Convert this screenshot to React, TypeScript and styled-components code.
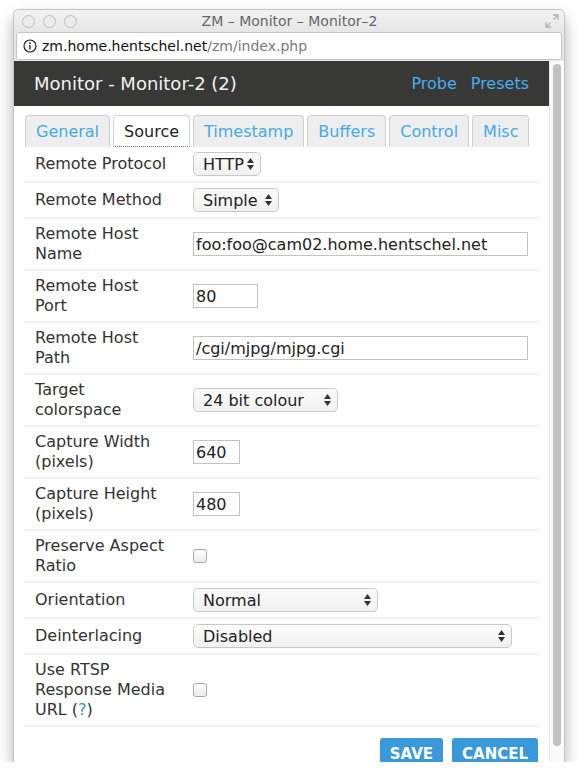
import React from 'react';
import styled, { createGlobalStyle } from 'styled-components';

const GlobalStyle = createGlobalStyle`
  html, body {
    margin: 0;
    padding: 0;
    background: #fff;
  }
  body {
    font-family: "DejaVu Sans", Verdana, sans-serif;
    color: #333;
  }
`;

const Window = styled.div`
  margin: 10px 14px 0;
  width: 550px;
  height: 752px;
  display: flex;
  flex-direction: column;
  border-radius: 5px 5px 0 0;
  overflow: hidden;
  box-shadow: 0 0 0 1px #c4c4c4, 0 8px 16px rgba(0, 0, 0, 0.35);
  background: #fff;
`;

const TitleBar = styled.div`
  height: 22px;
  display: flex;
  align-items: center;
  padding: 0 6px 0 8px;
  background: linear-gradient(#f2f2f2, #e6e6e6);
  position: relative;
`;

const Lights = styled.div`
  display: flex;
  gap: 8px;
`;

const Light = styled.span`
  width: 11px;
  height: 11px;
  border-radius: 50%;
  border: 1px solid #bdbdbd;
  background: #ececec;
`;

const WindowTitle = styled.div`
  flex: 1;
  text-align: center;
  font-size: 14px;
  color: #666;
  margin-right: 56px;
`;

const UrlBar = styled.div`
  height: 28px;
  padding: 0 2px 1px;
  background: #e6e6e6;
  display: flex;
`;

const UrlField = styled.div`
  flex: 1;
  display: flex;
  align-items: center;
  gap: 5px;
  padding: 0 6px;
  background: #fff;
  border: 1px solid #c6c6c6;
  border-radius: 3px;
  font-size: 14px;
  color: #111;
`;

const UrlPath = styled.span`
  color: #7a7a7a;
`;

const Viewport = styled.div`
  flex: 1;
  display: flex;
  min-height: 0;
`;

const Page = styled.div`
  flex: 1;
  overflow: hidden;
`;

const ScrollTrack = styled.div`
  width: 15px;
  border-left: 1px solid #e8e8e8;
  background: #fafafa;
  padding: 3px 3px 0 3px;
  box-sizing: border-box;
`;

const ScrollThumb = styled.div`
  width: 8px;
  height: 682px;
  border-radius: 4px;
  background: #c2c2c2;
`;

const Header = styled.div`
  height: 45px;
  background: #383836;
  display: flex;
  align-items: center;
  padding: 0 20px;
`;

const PageTitle = styled.h1`
  flex: 1;
  margin: 0;
  font-size: 18px;
  font-weight: normal;
  color: #f2f2f2;
`;

const HeaderLink = styled.a`
  color: #44aef0;
  font-size: 16px;
  margin-left: 14px;
  text-decoration: none;
`;

const Tabs = styled.div`
  display: flex;
  gap: 3px;
  margin: 9px 10px 0 11px;
`;

const Tab = styled.div<{ $active?: boolean }>`
  height: 32px;
  box-sizing: border-box;
  padding: 0 10px;
  display: flex;
  align-items: center;
  font-size: 16px;
  border: 1px solid #d0d0d0;
  border-bottom: ${(p) => (p.$active ? '1px dotted #6a6aa8' : 'none')};
  border-radius: 4px 4px 0 0;
  background: ${(p) => (p.$active ? '#fff' : '#eee')};
  color: ${(p) => (p.$active ? '#222' : '#45aaea')};
`;

const Form = styled.div`
  margin: 0 11px 0 10px;
`;

const Row = styled.div`
  display: grid;
  grid-template-columns: 158px 1fr;
  align-items: center;
  padding: 5px 0 5px 11px;
  border-bottom: 2px solid #f0f0f0;
`;

const Label = styled.div`
  max-width: 140px;
  font-size: 16px;
  line-height: 20px;
  color: #333;
`;

const Help = styled.span`
  color: #2f93d8;
`;

const Control = styled.div`
  display: flex;
  align-items: center;
  min-height: 24px;
`;

const SelectBox = styled.div<{ $width: number }>`
  width: ${(p) => p.$width}px;
  height: 24px;
  box-sizing: border-box;
  display: flex;
  align-items: center;
  padding: 0 5px 0 9px;
  border: 1px solid #c8c8c8;
  border-radius: 5px;
  background: linear-gradient(#fbfbfb, #f1f1f1);
  font-size: 16px;
  color: #222;
`;

const SelectText = styled.span`
  flex: 1;
`;

const TextInput = styled.input<{ $width: number }>`
  width: ${(p) => p.$width}px;
  height: 24px;
  box-sizing: border-box;
  border: 1px solid #c2c2c2;
  padding: 0 2px;
  font-family: "DejaVu Sans", Verdana, sans-serif;
  font-size: 16px;
  color: #222;
  outline: none;
`;

const Checkbox = styled.span`
  width: 14px;
  height: 14px;
  box-sizing: border-box;
  border: 1px solid #a8a8a8;
  border-radius: 3px;
  background: linear-gradient(#fff, #ececec);
`;

const Actions = styled.div`
  display: flex;
  justify-content: flex-end;
  gap: 9px;
  margin: 11px 11px 0 0;
`;

const Button = styled.button`
  height: 32px;
  padding: 7px 10px 0;
  border: none;
  border-radius: 3px 3px 0 0;
  background: #3a9ad9;
  color: #fff;
  font-family: "DejaVu Sans", Verdana, sans-serif;
  font-size: 15px;
  font-weight: bold;
  display: flex;
  align-items: flex-start;
`;

const Arrows = () => (
  <svg width="9" height="14" viewBox="0 0 9 14">
    <path d="M4.5 1 L8 6 H1 Z M4.5 13 L8 8 H1 Z" fill="#333" />
  </svg>
);

const InfoIcon = () => (
  <svg width="14" height="14" viewBox="0 0 14 14">
    <circle cx="7" cy="7" r="6" fill="none" stroke="#222" strokeWidth="1.2" />
    <circle cx="7" cy="4.2" r="0.9" fill="#222" />
    <rect x="6.3" y="6" width="1.4" height="4.5" fill="#222" />
  </svg>
);

const ResizeIcon = styled.svg`
  position: absolute;
  right: 5px;
  top: 4px;
`;

type Field =
  | { label: React.ReactNode; kind: 'select'; value: string; width: number }
  | { label: React.ReactNode; kind: 'input'; value: string; width: number }
  | { label: React.ReactNode; kind: 'check' };

const fields: Field[] = [
  { label: 'Remote Protocol', kind: 'select', value: 'HTTP', width: 68 },
  { label: 'Remote Method', kind: 'select', value: 'Simple', width: 86 },
  { label: 'Remote Host Name', kind: 'input', value: 'foo:foo@cam02.home.hentschel.net', width: 335 },
  { label: 'Remote Host Port', kind: 'input', value: '80', width: 65 },
  { label: 'Remote Host Path', kind: 'input', value: '/cgi/mjpg/mjpg.cgi', width: 335 },
  { label: 'Target colorspace', kind: 'select', value: '24 bit colour', width: 145 },
  { label: 'Capture Width (pixels)', kind: 'input', value: '640', width: 47 },
  { label: 'Capture Height (pixels)', kind: 'input', value: '480', width: 47 },
  { label: 'Preserve Aspect Ratio', kind: 'check' },
  { label: 'Orientation', kind: 'select', value: 'Normal', width: 185 },
  { label: 'Deinterlacing', kind: 'select', value: 'Disabled', width: 319 },
  {
    label: (
      <>
        Use RTSP Response Media URL (<Help>?</Help>)
      </>
    ),
    kind: 'check',
  },
];

const tabs = ['General', 'Source', 'Timestamp', 'Buffers', 'Control', 'Misc'];

const App: React.FC = () => (
  <>
    <GlobalStyle />
    <Window>
      <TitleBar>
        <Lights>
          <Light />
          <Light />
          <Light />
        </Lights>
        <WindowTitle>ZM – Monitor – Monitor–2</WindowTitle>
        <ResizeIcon width="14" height="14" viewBox="0 0 14 14">
          <path d="M8 1 H13 V6 M13 1 L8.5 5.5 M6 13 H1 V8 M1 13 L5.5 8.5" fill="none" stroke="#b0b0b0" strokeWidth="1.3" />
        </ResizeIcon>
      </TitleBar>
      <UrlBar>
        <UrlField>
          <InfoIcon />
          <span>
            zm.home.hentschel.net<UrlPath>/zm/index.php</UrlPath>
          </span>
        </UrlField>
      </UrlBar>
      <Viewport>
        <Page>
          <Header>
            <PageTitle>Monitor - Monitor-2 (2)</PageTitle>
            <HeaderLink>Probe</HeaderLink>
            <HeaderLink>Presets</HeaderLink>
          </Header>
          <Tabs>
            {tabs.map((t) => (
              <Tab key={t} $active={t === 'Source'}>
                {t}
              </Tab>
            ))}
          </Tabs>
          <Form>
            {fields.map((f, i) => (
              <Row key={i}>
                <Label>{f.label}</Label>
                <Control>
                  {f.kind === 'select' && (
                    <SelectBox $width={f.width}>
                      <SelectText>{f.value}</SelectText>
                      <Arrows />
                    </SelectBox>
                  )}
                  {f.kind === 'input' && <TextInput $width={f.width} defaultValue={f.value} readOnly />}
                  {f.kind === 'check' && <Checkbox />}
                </Control>
              </Row>
            ))}
          </Form>
          <Actions>
            <Button>SAVE</Button>
            <Button>CANCEL</Button>
          </Actions>
        </Page>
        <ScrollTrack>
          <ScrollThumb />
        </ScrollTrack>
      </Viewport>
    </Window>
  </>
);

export default App;
